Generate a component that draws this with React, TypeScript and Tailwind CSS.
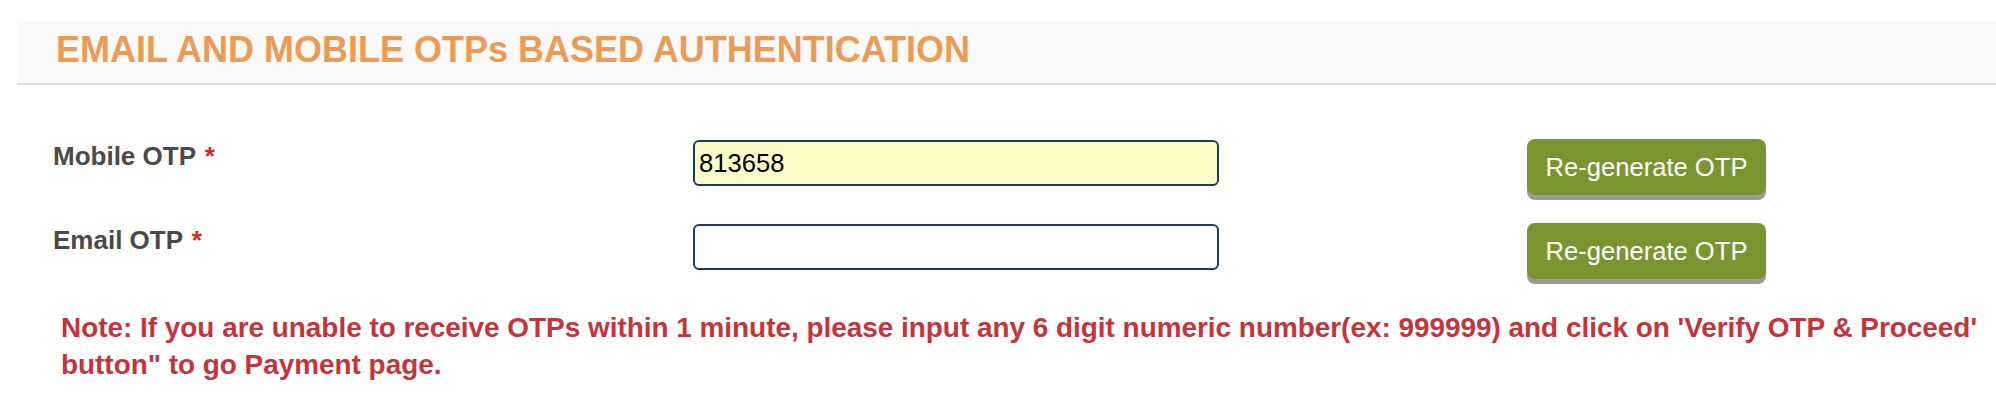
import React, { useState } from 'react';

function OtpRow({ label, value, filled }: { label: string; value: string; filled?: boolean }) {
  const [text, setText] = useState(value);
  return (
    <div className="grid h-[84px] grid-cols-[640px_834px_auto] items-start pl-[53px]">
      <label className="mt-[2px] text-[26px] font-bold leading-[30px] text-[#4a4a4a]">
        {label} <span className="ml-[2px] text-[#cc2a22]">*</span>
      </label>
      <input
        value={text}
        onChange={(e) => setText(e.target.value)}
        className={`mt-[1px] h-[46px] w-[526px] rounded-[6px] border-2 border-[#1f3b5e] pl-[4px] text-[25.6px] text-black outline-none ${
          filled ? 'bg-[#fafcc6]' : 'bg-white'
        }`}
      />
      <button className="h-[56px] w-[239px] rounded-[8px] bg-[#7a9530] text-[25.6px] text-white shadow-[0_5px_0_#9a9a9a]">
        Re-generate OTP
      </button>
    </div>
  );
}

function App() {
  return (
    <div className="min-h-screen bg-white pt-[21px] font-['Liberation_Sans',Arial,sans-serif]">
      <div className="ml-[17px] border-b-2 border-[#dddddd] bg-[#f9f9f9] pt-[11px] pb-[15px] pl-[39px]">
        <h2 className="text-[36px] font-bold leading-[36px] text-[#ec9b57]">
          EMAIL AND MOBILE OTPs BASED AUTHENTICATION
        </h2>
      </div>

      <div className="pt-[54px]">
        <OtpRow label="Mobile OTP" value="813658" filled />
        <OtpRow label="Email OTP" value="" />
      </div>

      <p className="mt-[2px] pl-[61px] text-[27.9px] font-bold leading-[37px] text-[#c3343d]">
        Note: If you are unable to receive OTPs within 1 minute, please input any 6 digit numeric number(ex: 999999) and
        click on 'Verify OTP &amp; Proceed' button" to go Payment page.
      </p>
    </div>
  );
}

export default App;
